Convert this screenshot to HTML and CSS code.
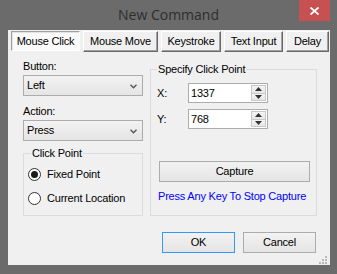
FILE: index.html
```html
<!DOCTYPE html>
<html>
<head>
<meta charset="utf-8">
<title>New Command</title>
<link rel="stylesheet" href="styles.css">
</head>
<body>
<div class="window">
  <div class="titlebar">
    <span class="title-spacer"></span>
    <div class="title">New Command</div>
    <div class="close">
      <svg width="9" height="8" viewBox="0 0 9 8"><path d="M0.5 0.5 L8.5 7.5 M8.5 0.5 L0.5 7.5" stroke="#fff" stroke-width="1.8" fill="none"/></svg>
    </div>
  </div>
  <div class="client">
    <div class="tabs">
      <div class="tab selected w-click">Mouse Click</div>
      <div class="tab w-move">Mouse Move</div>
      <div class="tab w-key">Keystroke</div>
      <div class="tab w-text">Text Input</div>
      <div class="tab w-delay">Delay</div>
    </div>
    <div class="content">
      <div class="left">
        <div class="lbl">Button:</div>
        <div class="combo"><span>Left</span><svg class="chev" width="7" height="5" viewBox="0 0 7 5"><path d="M0.5 0.8 L3.5 3.8 L6.5 0.8" stroke="#555" stroke-width="1.4" fill="none"/></svg></div>
        <div class="lbl lbl-gap">Action:</div>
        <div class="combo"><span>Press</span><svg class="chev" width="7" height="5" viewBox="0 0 7 5"><path d="M0.5 0.8 L3.5 3.8 L6.5 0.8" stroke="#555" stroke-width="1.4" fill="none"/></svg></div>
        <fieldset class="group group-click">
          <legend>Click Point</legend>
          <div class="radio-row"><span class="radio checked"></span><span>Fixed Point</span></div>
          <div class="radio-row row-gap"><span class="radio"></span><span>Current Location</span></div>
        </fieldset>
      </div>
      <fieldset class="group group-specify">
        <legend>Specify Click Point</legend>
        <div class="coord"><span class="coord-lbl">X:</span><div class="spin-input"><span class="val">1337</span><div class="spinner"><span class="spin-btn"><svg width="7" height="5" viewBox="0 0 7 5"><path d="M3.5 0 L7 4 L0 4 Z" fill="#333"/></svg></span><span class="spin-btn"><svg width="7" height="5" viewBox="0 0 7 5"><path d="M0 1 L7 1 L3.5 5 Z" fill="#333"/></svg></span></div></div></div>
        <div class="coord row-gap-y"><span class="coord-lbl">Y:</span><div class="spin-input"><span class="val">768</span><div class="spinner"><span class="spin-btn"><svg width="7" height="5" viewBox="0 0 7 5"><path d="M3.5 0 L7 4 L0 4 Z" fill="#333"/></svg></span><span class="spin-btn"><svg width="7" height="5" viewBox="0 0 7 5"><path d="M0 1 L7 1 L3.5 5 Z" fill="#333"/></svg></span></div></div></div>
        <div class="btn capture">Capture</div>
        <div class="hint">Press Any Key To Stop Capture</div>
      </fieldset>
    </div>
    <div class="footer">
      <div class="btn dlg default">OK</div>
      <div class="btn dlg">Cancel</div>
    </div>
    <div class="grip">
      <svg width="8" height="8" viewBox="0 0 8 8" fill="#b8b8b8"><rect x="6" y="0" width="2" height="2"/><rect x="3" y="3" width="2" height="2"/><rect x="6" y="3" width="2" height="2"/><rect x="0" y="6" width="2" height="2"/><rect x="3" y="6" width="2" height="2"/><rect x="6" y="6" width="2" height="2"/></svg>
    </div>
  </div>
</div>
</body>
</html>
```
FILE: styles.css
```css
* { box-sizing: border-box; }
html, body { margin: 0; padding: 0; }
body {
  width: 337px;
  height: 274px;
  overflow: hidden;
  font-family: "Liberation Sans", Arial, sans-serif;
  font-size: 11px;
  letter-spacing: -0.2px;
  color: #000;
}
.window {
  width: 337px;
  height: 274px;
  background: #6b6b6b;
  display: flex;
  flex-direction: column;
}
.titlebar {
  height: 30px;
  display: grid;
  grid-template-columns: 1fr auto 1fr;
}
.title {
  font-family: "Open Sans", "Noto Sans", sans-serif;
  font-size: 14px;
  line-height: 30px;
  letter-spacing: 0;
  color: #2e2e2e;
}
.close {
  justify-self: end;
  align-self: start;
  width: 31px;
  height: 21px;
  margin-right: 7px;
  background: #c75050;
  display: flex;
  align-items: center;
  justify-content: center;
}
.close svg { display: block; }
.client {
  margin: 0 7px 0 8px;
  height: 235px;
  background: #f0f0f0;
  display: flex;
  flex-direction: column;
}
.tabs {
  display: flex;
  gap: 3px;
  padding: 1px 0 0 3px;
}
.tab {
  height: 21px;
  line-height: 19px;
  text-align: center;
  white-space: nowrap;
  background: #f0f0f0;
  border-top: 1px solid #fff;
  border-left: 1px solid #fff;
  border-right: 1px solid #696969;
  border-bottom: 1px solid #696969;
  box-shadow: inset -1px -1px 0 #a0a0a0;
}
.tab.selected {
  height: 20px;
  line-height: 18px;
  background: #fafafa;
  border-top: 1px solid #a0a0a0;
  border-left: 1px solid #a0a0a0;
  border-right: 1px solid #fff;
  border-bottom: 1px solid #fff;
  box-shadow: inset 1px 1px 0 #e3e3e3;
}
.w-click { width: 69px; }
.w-move { width: 75px; }
.w-key { width: 60px; }
.w-text { width: 59px; }
.w-delay { width: 43px; }
.content {
  display: grid;
  grid-template-columns: 120px 167px;
  column-gap: 7px;
  margin-top: 8px;
  padding-left: 15px;
}
.left {
  display: flex;
  flex-direction: column;
}
.lbl {
  line-height: 13px;
  height: 13px;
  margin-bottom: 2px;
}
.lbl-gap { margin-top: 9px; }
.combo {
  height: 21px;
  border: 1px solid #acacac;
  background: linear-gradient(#f2f2f2, #e5e5e5);
  display: flex;
  align-items: center;
  justify-content: space-between;
  padding: 0 5px 0 3px;
  line-height: 19px;
}
.chev { display: block; margin-top: 1px; }
.group {
  margin: 0;
  border: 1px solid #dcdcdc;
  min-inline-size: 0;
}
.group legend {
  padding: 0 1px;
  line-height: 12px;
  height: 12px;
}
.group-click {
  margin-top: 6px;
  padding: 7px 0 9px 4px;
}
.group-click legend { margin-left: 3px; }
.radio-row {
  display: flex;
  align-items: center;
  height: 16px;
  gap: 6px;
}
.row-gap { margin-top: 8px; }
.radio {
  width: 13px;
  height: 13px;
  border-radius: 50%;
  border: 1px solid #333;
  background: #fff;
  display: flex;
  align-items: center;
  justify-content: center;
  flex: none;
}
.radio.checked::after {
  content: "";
  width: 7px;
  height: 7px;
  border-radius: 50%;
  background: #1c1c1c;
}
.group-specify {
  margin-top: 3px;
  padding: 8px 0 0 6px;
}
.coord {
  display: flex;
  align-items: center;
  height: 20px;
}
.row-gap-y { margin-top: 6px; }
.coord-lbl { width: 31px; }
.spin-input {
  width: 80px;
  height: 20px;
  border: 1px solid #acacac;
  background: #fff;
  display: flex;
  align-items: stretch;
  justify-content: space-between;
}
.val {
  padding-left: 2px;
  line-height: 18px;
}
.spinner {
  width: 16px;
  display: flex;
  flex-direction: column;
  padding: 1px 1px 1px 0;
  gap: 0;
}
.spin-btn {
  flex: 1;
  border: 1px solid #c8c8c8;
  background: linear-gradient(#f4f4f4, #e6e6e6);
  display: flex;
  align-items: center;
  justify-content: center;
}
.spin-btn + .spin-btn { border-top: none; }
.spin-btn svg { display: block; }
.btn {
  height: 21px;
  border: 1px solid #acacac;
  background: linear-gradient(#f2f2f2, #e5e5e5);
  text-align: center;
  line-height: 19px;
}
.capture {
  width: 151px;
  margin: 32px 0 0 2px;
}
.hint {
  margin: 8px 0 0 1px;
  line-height: 13px;
  color: #0000ff;
  white-space: nowrap;
}
.footer {
  display: flex;
  justify-content: flex-end;
  gap: 8px;
  margin-top: 16px;
  padding-right: 14px;
}
.dlg { width: 73px; }
.default { border-color: #3399ff; }
.grip {
  align-self: flex-end;
  margin: 3px 3px 0 0;
  height: 8px;
}
.grip svg { display: block; }
```
